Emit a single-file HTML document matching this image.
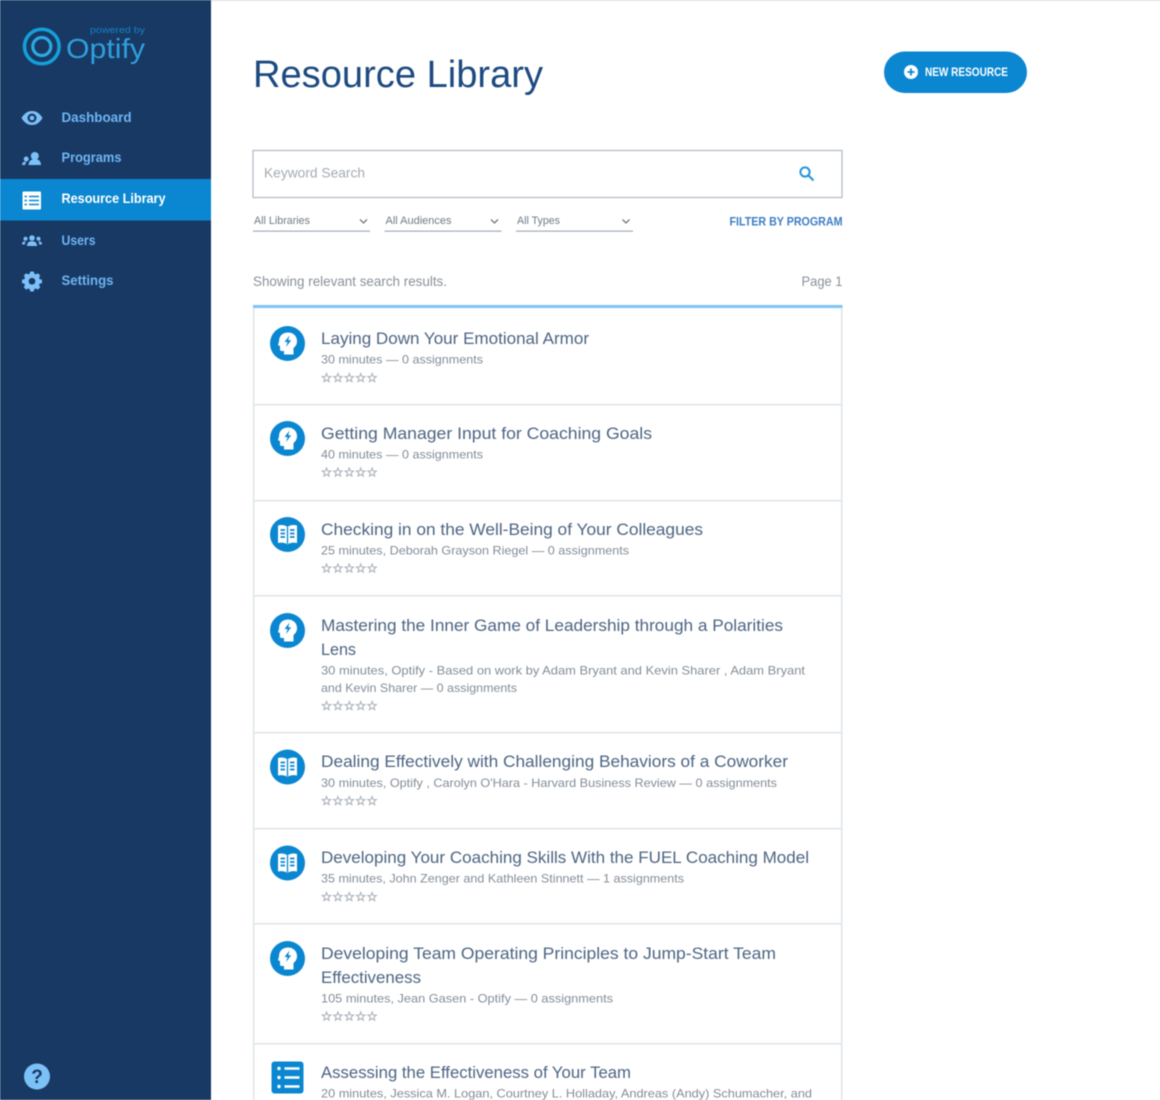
<!DOCTYPE html>
<html><head><meta charset="utf-8"><title>Resource Library</title>
<style>
html,body{margin:0;padding:0;background:#fff;width:1160px;height:1100px;overflow:hidden}
svg{display:block;font-family:"Liberation Sans",sans-serif;filter:blur(.4px)}
.t{font-size:17px;fill:#4d6583}
.m{font-size:12px;fill:#838d99}
.n{font-size:14px;font-weight:bold;fill:#6db5f5}
.f{font-size:11px;fill:#6f7a87}
</style></head><body>
<svg width="1160" height="1100" viewBox="0 0 1160 1100" xmlns="http://www.w3.org/2000/svg">
<defs>
<g id="star"><path d="M5 1 6.100 3.900 9.200 4.100 6.800 6.100 7.600 9.100 5 7.500 2.400 9.100 3.200 6.100 .8 4.100 3.900 3.900Z" fill="none" stroke="#aeb4bb" stroke-width="1.100"/></g>
<g id="stars"><use href="#star"/><use href="#star" x="11.400"/><use href="#star" x="22.800"/><use href="#star" x="34.200"/><use href="#star" x="45.600"/></g>
<g id="head"><circle cx="17.500" cy="17.500" r="17.500" fill="#0a87d0"/><path d="M9 15.500C9 9.500 13 6.500 18 6.500c5.500 0 9 3.800 9 8.500 0 3.500-1.500 5.500-3.500 7v6.500H14v-3.500h-2.500a1.500 1.500 0 0 1-1.500-1.500V20l-2-.8Z" fill="#fff"/><path d="M19.500 9.500l-5 6.500h3l-1.500 5 5.200-6.800h-3Z" fill="#0a87d0"/></g>
<g id="book"><circle cx="17.500" cy="17.500" r="17.500" fill="#0a87d0"/><path d="M8 8.500c3.500-1 7-.5 9.500 1.500 2.500-2 6-2.500 9.500-1.500v17.500c-3.500-.8-7-.5-9.500 1.500-2.500-2-6-2.300-9.500-1.500Z" fill="#fff"/><path d="M17.500 10v17" stroke="#0a87d0" stroke-width="1.300"/><path d="M10.500 13h4.500M10.500 16.500h4.500M10.500 20h4.500M20 13h4.500M20 16.500h4.500M20 20h4.500" stroke="#0a87d0" stroke-width="1.800"/></g>
</defs>
<rect width="1160" height="1100" fill="#fff"/>
<rect width="1160" height="1" fill="#d9dcdf"/>
<rect y="0" width="211" height="1100" fill="#183963"/>
<rect y="179" width="211" height="41.500" fill="#0a87d0"/>

<!-- logo -->
<circle cx="41.800" cy="46.500" r="17.300" fill="none" stroke="#14a0dc" stroke-width="3.500"/>
<circle cx="41.800" cy="46.500" r="9" fill="none" stroke="#2ba9e4" stroke-width="3.200"/>
<text x="66" y="58" font-size="28" fill="#2f9fdc" textLength="79" lengthAdjust="spacingAndGlyphs">Optify</text>
<text x="90" y="33" font-size="9" fill="#1782c4" textLength="55" lengthAdjust="spacingAndGlyphs">powered by</text>

<!-- nav -->
<path d="M21.500 118c3-5 6.500-7 10.500-7s7.500 2 10.500 7c-3 5-6.500 7-10.500 7s-7.500-2-10.500-7Z" fill="#7cc0f8"/>
<circle cx="32" cy="118" r="4.500" fill="#183963"/><circle cx="32" cy="118" r="2.300" fill="#7cc0f8"/>
<text x="61.500" y="122" class="n" textLength="70" lengthAdjust="spacingAndGlyphs">Dashboard</text>

<circle cx="34.800" cy="156" r="4" fill="#7cc0f8"/><path d="M28.500 165c.3-3.500 2-5 3.800-5.500h5c2 .5 3.500 2 3.700 5.500Z" fill="#7cc0f8"/><circle cx="26.200" cy="159" r="2.500" fill="#7cc0f8"/><path d="M22 165c0-2.500 1.500-3.500 4-3.500l-.8 3.500Z" fill="#7cc0f8"/>
<text x="61.500" y="162" class="n" textLength="60" lengthAdjust="spacingAndGlyphs">Programs</text>

<rect x="22.500" y="191.500" width="18.500" height="18" rx="1" fill="#fff"/>
<path d="M24.500 196.500h2.500M29 196.500h10M24.500 200.500h2.500M29 200.500h10M24.500 204.500h2.500M29 204.500h10" stroke="#0a87d0" stroke-width="1.400"/>
<text x="61.500" y="203" class="n" style="fill:#fff" textLength="104" lengthAdjust="spacingAndGlyphs">Resource Library</text>

<g fill="#7cc0f8"><circle cx="32" cy="238" r="2.800"/><path d="M27 246c0-3.300 1.800-4.800 5-4.800s5 1.500 5 4.800Z"/><circle cx="25.500" cy="238.800" r="2"/><path d="M22 244.500c0-2.300 1.200-3.200 3.300-3.200l-.5 3.200Z"/><circle cx="38.500" cy="238.800" r="2"/><path d="M42 244.500c0-2.300-1.200-3.200-3.300-3.200l.5 3.200Z"/></g>
<text x="61.500" y="245" class="n" textLength="34" lengthAdjust="spacingAndGlyphs">Users</text>

<g transform="translate(32 281.200) scale(.8) translate(-32 -281.200)">
<path d="M29.800 269h4.400l.6 2.800 2 .9 2.500-1.500 3 3-1.500 2.500.8 2 2.900.6v4.400l-2.900.6-.8 2 1.500 2.500-3 3-2.500-1.500-2 .8-.6 2.900h-4.400l-.6-2.900-2-.8-2.500 1.500-3-3 1.500-2.500-.8-2-2.900-.6v-4.400l2.900-.6.800-2-1.500-2.500 3-3 2.500 1.500 2-.9Z" fill="#7cc0f8"/>
<circle cx="32" cy="281.200" r="4.200" fill="#183963"/>
</g>
<text x="61.500" y="285" class="n" textLength="52" lengthAdjust="spacingAndGlyphs">Settings</text>

<circle cx="37" cy="1076.500" r="13" fill="#7cc0f8"/>
<text x="37" y="1083" font-size="19" font-weight="bold" fill="#183963" text-anchor="middle">?</text>

<!-- header -->
<text x="253" y="87" font-size="38" fill="#1c4a80" textLength="290" lengthAdjust="spacingAndGlyphs">Resource Library</text>
<rect x="884" y="51.500" width="143" height="41.500" rx="20.750" fill="#0a87d0"/>
<circle cx="911" cy="72" r="7" fill="#fff"/>
<path d="M907.500 72h7M911 68.500v7" stroke="#0a87d0" stroke-width="1.800"/>
<text x="925" y="76" font-size="12" font-weight="bold" fill="#fff" textLength="83" lengthAdjust="spacingAndGlyphs">NEW RESOURCE</text>

<!-- search -->
<rect x="253" y="150.500" width="589" height="47" fill="#fff" stroke="#aeb8c4" stroke-width="1.200"/>
<text x="264" y="177.500" font-size="14" fill="#a5abb2" textLength="101" lengthAdjust="spacingAndGlyphs">Keyword Search</text>
<circle cx="805" cy="172" r="4.600" fill="none" stroke="#2a96d8" stroke-width="2"/>
<path d="M808.500 175.500l5 5" stroke="#2a96d8" stroke-width="2.200"/>

<!-- filters -->
<text x="254" y="224" class="f" textLength="56" lengthAdjust="spacingAndGlyphs">All Libraries</text>
<path d="M360 219.500l3.500 3.500 3.500-3.500" fill="none" stroke="#6f7a87" stroke-width="1.300"/>
<rect x="253" y="230.500" width="117" height="1.300" fill="#a9b2bd"/>
<text x="385.500" y="224" class="f" textLength="66" lengthAdjust="spacingAndGlyphs">All Audiences</text>
<path d="M491 219.500l3.500 3.500 3.500-3.500" fill="none" stroke="#6f7a87" stroke-width="1.300"/>
<rect x="384.500" y="230.500" width="117" height="1.300" fill="#a9b2bd"/>
<text x="517" y="224" class="f" textLength="43" lengthAdjust="spacingAndGlyphs">All Types</text>
<path d="M622.500 219.500l3.500 3.500 3.500-3.500" fill="none" stroke="#6f7a87" stroke-width="1.300"/>
<rect x="516" y="230.500" width="117" height="1.300" fill="#a9b2bd"/>
<text x="729.500" y="225.500" font-size="12" font-weight="bold" fill="#3c7cc4" textLength="113" lengthAdjust="spacingAndGlyphs">FILTER BY PROGRAM</text>

<text x="253" y="286" font-size="14" fill="#89919a" textLength="194" lengthAdjust="spacingAndGlyphs">Showing relevant search results.</text>
<text x="801.500" y="286" font-size="14" fill="#89919a" textLength="41" lengthAdjust="spacingAndGlyphs">Page 1</text>

<!-- list frame -->
<rect x="253" y="306" width="1.500" height="794" fill="#dfe4ea"/>
<rect x="841" y="306" width="1.500" height="794" fill="#dfe4ea"/>
<rect x="253" y="305" width="589.500" height="3" fill="#80c3f6"/>
<rect x="253" y="404" width="589" height="1.500" fill="#dfe4ea"/>
<rect x="253" y="500" width="589" height="1.500" fill="#dfe4ea"/>
<rect x="253" y="595" width="589" height="1.500" fill="#dfe4ea"/>
<rect x="253" y="732" width="589" height="1.500" fill="#dfe4ea"/>
<rect x="253" y="828" width="589" height="1.500" fill="#dfe4ea"/>
<rect x="253" y="923" width="589" height="1.500" fill="#dfe4ea"/>
<rect x="253" y="1043" width="589" height="1.500" fill="#dfe4ea"/>

<!-- row 1 -->
<use href="#head" x="270" y="326"/>
<text x="321" y="344" class="t" textLength="268" lengthAdjust="spacingAndGlyphs">Laying Down Your Emotional Armor</text>
<text x="321" y="363.500" class="m" textLength="162" lengthAdjust="spacingAndGlyphs">30 minutes — 0 assignments</text>
<use href="#stars" x="321.500" y="372.500"/>

<!-- row 2 -->
<use href="#head" x="270" y="421"/>
<text x="321" y="439" class="t" textLength="331" lengthAdjust="spacingAndGlyphs">Getting Manager Input for Coaching Goals</text>
<text x="321" y="458.500" class="m" textLength="162" lengthAdjust="spacingAndGlyphs">40 minutes — 0 assignments</text>
<use href="#stars" x="321.500" y="467"/>

<!-- row 3 -->
<use href="#book" x="270" y="517"/>
<text x="321" y="535" class="t" textLength="382" lengthAdjust="spacingAndGlyphs">Checking in on the Well-Being of Your Colleagues</text>
<text x="321" y="554.500" class="m" textLength="308" lengthAdjust="spacingAndGlyphs">25 minutes, Deborah Grayson Riegel — 0 assignments</text>
<use href="#stars" x="321.500" y="563"/>

<!-- row 4 -->
<use href="#head" x="270" y="613"/>
<text x="321" y="631" class="t" textLength="462" lengthAdjust="spacingAndGlyphs">Mastering the Inner Game of Leadership through a Polarities</text>
<text x="321" y="655" class="t" textLength="35" lengthAdjust="spacingAndGlyphs">Lens</text>
<text x="321" y="674.500" class="m" textLength="484" lengthAdjust="spacingAndGlyphs">30 minutes, Optify - Based on work by Adam Bryant and Kevin Sharer , Adam Bryant</text>
<text x="321" y="692" class="m" textLength="196" lengthAdjust="spacingAndGlyphs">and Kevin Sharer — 0 assignments</text>
<use href="#stars" x="321.500" y="700.500"/>

<!-- row 5 -->
<use href="#book" x="270" y="749.500"/>
<text x="321" y="767" class="t" textLength="467" lengthAdjust="spacingAndGlyphs">Dealing Effectively with Challenging Behaviors of a Coworker</text>
<text x="321" y="787" class="m" textLength="456" lengthAdjust="spacingAndGlyphs">30 minutes, Optify , Carolyn O'Hara - Harvard Business Review — 0 assignments</text>
<use href="#stars" x="321.500" y="795.500"/>

<!-- row 6 -->
<use href="#book" x="270" y="845.500"/>
<text x="321" y="863" class="t" textLength="488" lengthAdjust="spacingAndGlyphs">Developing Your Coaching Skills With the FUEL Coaching Model</text>
<text x="321" y="882.500" class="m" textLength="363" lengthAdjust="spacingAndGlyphs">35 minutes, John Zenger and Kathleen Stinnett — 1 assignments</text>
<use href="#stars" x="321.500" y="891.500"/>

<!-- row 7 -->
<use href="#head" x="270" y="941"/>
<text x="321" y="959" class="t" textLength="455" lengthAdjust="spacingAndGlyphs">Developing Team Operating Principles to Jump-Start Team</text>
<text x="321" y="983" class="t" textLength="100" lengthAdjust="spacingAndGlyphs">Effectiveness</text>
<text x="321" y="1002.500" class="m" textLength="292" lengthAdjust="spacingAndGlyphs">105 minutes, Jean Gasen - Optify — 0 assignments</text>
<use href="#stars" x="321.500" y="1011"/>

<!-- row 8 -->
<rect x="271.500" y="1061.500" width="32" height="32" rx="3" fill="#0a87d0"/>
<circle cx="279" cy="1068.500" r="1.700" fill="#fff"/><circle cx="279" cy="1077.500" r="1.700" fill="#fff"/><circle cx="279" cy="1086.500" r="1.700" fill="#fff"/>
<path d="M284.500 1068.500h15M284.500 1077.500h15M284.500 1086.500h15" stroke="#fff" stroke-width="2.500"/>
<text x="321" y="1078" class="t" textLength="310" lengthAdjust="spacingAndGlyphs">Assessing the Effectiveness of Your Team</text>
<text x="321" y="1097.500" class="m" textLength="491" lengthAdjust="spacingAndGlyphs">20 minutes, Jessica M. Logan, Courtney L. Holladay, Andreas (Andy) Schumacher, and</text>
</svg>
</body></html>
